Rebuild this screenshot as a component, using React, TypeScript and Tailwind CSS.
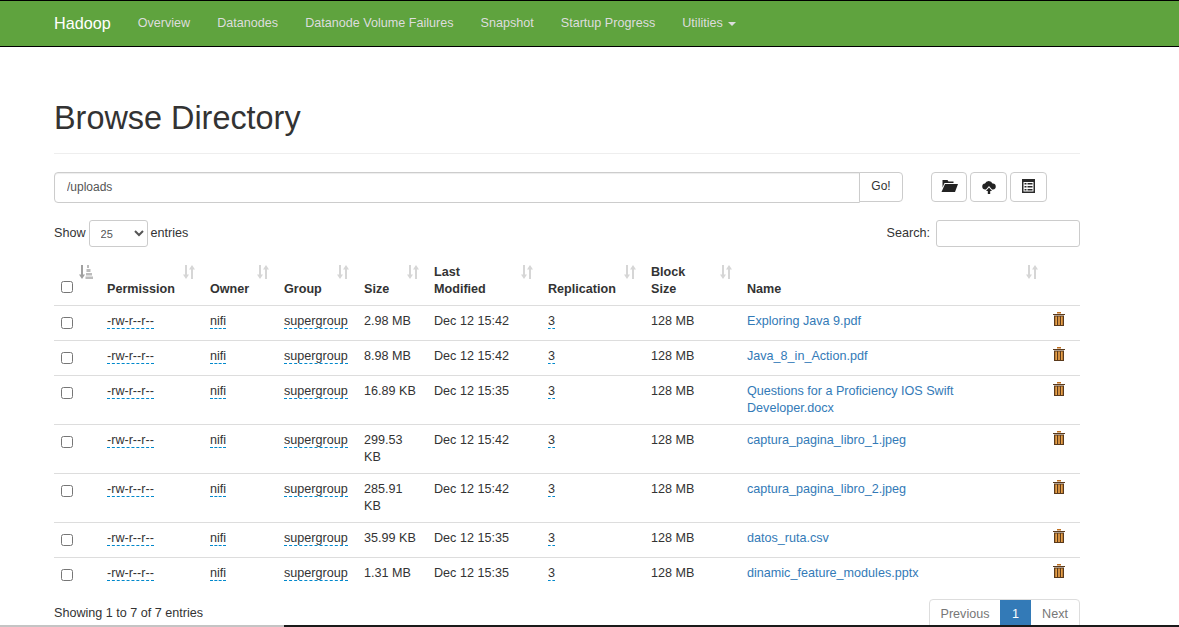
// App.tsx
const navLinks = ["Overview", "Datanodes", "Datanode Volume Failures", "Snapshot", "Startup Progress"];

const files = [
	{ size: "2.98 MB", modified: "Dec 12 15:42", name: "Exploring Java 9.pdf" },
	{ size: "8.98 MB", modified: "Dec 12 15:42", name: "Java_8_in_Action.pdf" },
	{ size: "16.89 KB", modified: "Dec 12 15:35", name: "Questions for a Proficiency IOS Swift Developer.docx" },
	{ size: "299.53 KB", modified: "Dec 12 15:42", name: "captura_pagina_libro_1.jpeg" },
	{ size: "285.91 KB", modified: "Dec 12 15:42", name: "captura_pagina_libro_2.jpeg" },
	{ size: "35.99 KB", modified: "Dec 12 15:35", name: "datos_ruta.csv" },
	{ size: "1.31 MB", modified: "Dec 12 15:35", name: "dinamic_feature_modules.pptx" },
];

function SortIcon() {
	return (
		<svg width="12" height="14" viewBox="0 0 12 14" className="absolute top-[10px] right-[7px]" fill="#d6d6d6">
			<path d="M2 0h2v9.5h2L3 14 0 9.5h2z" />
			<path d="M8 14h2V4.5h2L9 0 6 4.500h2z" />
		</svg>
	);
}

function SortAscIcon() {
	return (
		<svg width="14" height="14" viewBox="0 0 14 14" className="absolute top-[10px] left-[25px]">
			<path fill="#a0a0a0" d="M2 0h2v9.5h2L3 14 0 9.5h2z" />
			<path fill="#bcbcbc" d="M8 0h2v3H8zM7.500 4h4v3h-4zM7 8h6v2.500H7zM6.500 11.500h7.500V14H6.500z" />
		</svg>
	);
}

function TrashIcon() {
	return (
		<svg width="12" height="14" viewBox="0 0 12 14" className="-mt-px">
			<path fill="#c07020" d="M4 0h4v1.500H4z" />
			<path fill="#5a3a1c" d="M0 2h12v1H0z" />
			<path fill="#5a3a1c" d="M1 3.500h10V14H1z" />
			<path fill="#e8a048" d="M2.300 4.500h1.700V13H2.300zM5.150 4.500h1.700V13h-1.700zM8 4.500h1.700V13H8z" />
		</svg>
	);
}

function Editable({ children }: { children: string }) {
	return <span className="border-b border-dashed border-[#0088cc]">{children}</span>;
}

function Th({ children }: { children: React.ReactNode }) {
	return (
		<th className="relative border-b border-[#ddd] px-2 pt-[9px] pb-[7px] pr-[26px] text-left align-bottom font-bold">
			{children}
			<SortIcon />
		</th>
	);
}

export default function App() {
	return (
		<div className="relative h-screen overflow-hidden bg-white font-['Liberation_Sans',Arial,sans-serif] text-[12.6px] leading-[17px] text-[#333]">
			<nav className="flex h-[47px] items-center gap-[27px] border-t border-b border-black bg-[#5fa33e] pl-[54px] text-[#ddd]">
				<span className="text-[16.2px] text-white">Hadoop</span>
				{navLinks.map((link) => (
					<a key={link}>{link}</a>
				))}
				<a className="flex items-center">
					Utilities
					<span className="ml-[5px] h-0 w-0 border-x-[4px] border-t-[4px] border-x-transparent border-t-[#ddd]" />
				</a>
			</nav>

			<div className="mx-[54px] w-[1026px]">
				<div className="border-b border-[#eee] pt-[51px] pb-[15px]">
					<h1 className="text-[32.4px] leading-[40px] font-normal">Browse Directory</h1>
				</div>

				<div className="mt-[18px] flex h-[31px]">
					<input
						defaultValue="/uploads"
						className="h-[31px] w-[806px] rounded-l-[4px] border border-[#ccc] px-3 pb-[2px] text-[12px] text-[#555] shadow-[inset_0_1px_1px_rgba(0,0,0,0.075)]"
					/>
					<button className="-ml-px h-[30px] w-[44px] rounded-r-[4px] border border-[#ccc] bg-white pb-[2px] text-[12px]">Go!</button>
					<div className="ml-[28px] flex gap-[3px]">
						<button className="flex h-[30px] w-[36px] items-center justify-center rounded-[4px] border border-[#ccc]">
							<svg width="17" height="12" viewBox="0 0 17 12" fill="#222" className="-mt-[2px]">
								<path d="M1.500 0h5l1 1.500h5V3H3.500L1.500 7.500z" />
								<path d="M4 4h13l-3 8H0.500z" />
							</svg>
						</button>
						<button className="flex h-[30px] w-[37px] items-center justify-center rounded-[4px] border border-[#ccc]">
							<svg width="14" height="14" viewBox="0 0 14 14" fill="#222" className="-mt-[1px]">
								<path d="M3.500 9.500a3 3 0 0 1-.5-6A4 4 0 0 1 10.500 3.500a3 3 0 0 1 .5 6H10L7 6 4 9.500z" />
								<path d="M7 7.500l3 3.500H8.200v3H5.800v-3H4z" />
							</svg>
						</button>
						<button className="flex h-[30px] w-[37px] items-center justify-center rounded-[4px] border border-[#ccc]">
							<svg width="13" height="14" viewBox="0 0 13 14" fill="#2a2a2a" className="-mt-[2px]">
								<path fillRule="evenodd" d="M0 0h13v14H0zM1.500 3v9.500h10V3z" />
								<path d="M2.500 4h2v1.500h-2zM5.500 4h5v1.500h-5zM2.500 7h2v1.500h-2zM5.500 7h5v1.500h-5zM2.500 10h2v1.500h-2zM5.500 10h5v1.500h-5z" />
							</svg>
						</button>
					</div>
				</div>

				<div className="mt-[17px] flex h-[27px] items-center justify-between">
					<div className="flex items-center">
						Show
						<select className="mx-[3px] h-[27px] w-[59px] rounded-[3px] border border-[#ccc] pl-[7px] text-[11px] text-[#555]">
							<option>25</option>
						</select>
						entries
					</div>
					<div className="flex items-center">
						Search:
						<input className="ml-[6px] h-[27px] w-[144px] rounded-[3px] border border-[#ccc]" />
					</div>
				</div>

				<table className="mt-[8px] w-[1026px] table-fixed border-separate border-spacing-0">
					<colgroup>
						<col className="w-[45px]" />
						<col className="w-[103px]" />
						<col className="w-[74px]" />
						<col className="w-[80px]" />
						<col className="w-[70px]" />
						<col className="w-[114px]" />
						<col className="w-[103px]" />
						<col className="w-[96px]" />
						<col className="w-[306px]" />
						<col className="w-[35px]" />
					</colgroup>
					<thead>
						<tr>
							<th className="relative h-[51px] border-b border-[#ddd] px-2 pb-[12px] text-left align-bottom">
								<input type="checkbox" className="-ml-px block h-[12px] w-[12px]" />
								<SortAscIcon />
							</th>
							<Th>Permission</Th>
							<Th>Owner</Th>
							<Th>Group</Th>
							<Th>Size</Th>
							<Th>Last Modified</Th>
							<Th>Replication</Th>
							<Th>Block Size</Th>
							<Th>Name</Th>
							<th className="border-b border-[#ddd]" />
						</tr>
					</thead>
					<tbody>
						{files.map((file, idx) => {
							const td =
								idx === files.length - 1
									? "h-[35px] px-2 py-[7px] align-top border-b border-transparent"
									: "h-[35px] px-2 py-[7px] align-top border-b border-[#ddd]";
							return (
								<tr key={file.name}>
									<td className={td}>
										<input type="checkbox" className="-ml-px mt-[4px] block h-[12px] w-[12px]" />
									</td>
									<td className={td}>
										<Editable>-rw-r--r--</Editable>
									</td>
									<td className={td}>
										<Editable>nifi</Editable>
									</td>
									<td className={td}>
										<Editable>supergroup</Editable>
									</td>
									<td className={td}>{file.size}</td>
									<td className={td}>{file.modified}</td>
									<td className={td}>
										<Editable>3</Editable>
									</td>
									<td className={td}>128 MB</td>
									<td className={td}>
										<a className="text-[#337ab7]">{file.name}</a>
									</td>
									<td className={td}>
										<TrashIcon />
									</td>
								</tr>
							);
						})}
					</tbody>
				</table>

				<div className="flex items-start justify-between">
					<div className="mt-[12px]">Showing 1 to 7 of 7 entries</div>
					<div className="mt-[6px] flex h-[34px] rounded-[4px] border border-[#ddd] leading-[29px]">
						<a className="w-[70px] text-center text-[#777]">Previous</a>
						<a className="w-[31px] bg-[#337ab7] text-center text-white">1</a>
						<a className="w-[48px] text-center text-[#777]">Next</a>
					</div>
				</div>
			</div>

			<div className="absolute right-0 bottom-0 left-0 flex h-[2px]">
				<div className="w-[284px] bg-[#c4c4c4]" />
				<div className="flex-1 bg-[#1a1a1a]" />
			</div>
		</div>
	);
}
